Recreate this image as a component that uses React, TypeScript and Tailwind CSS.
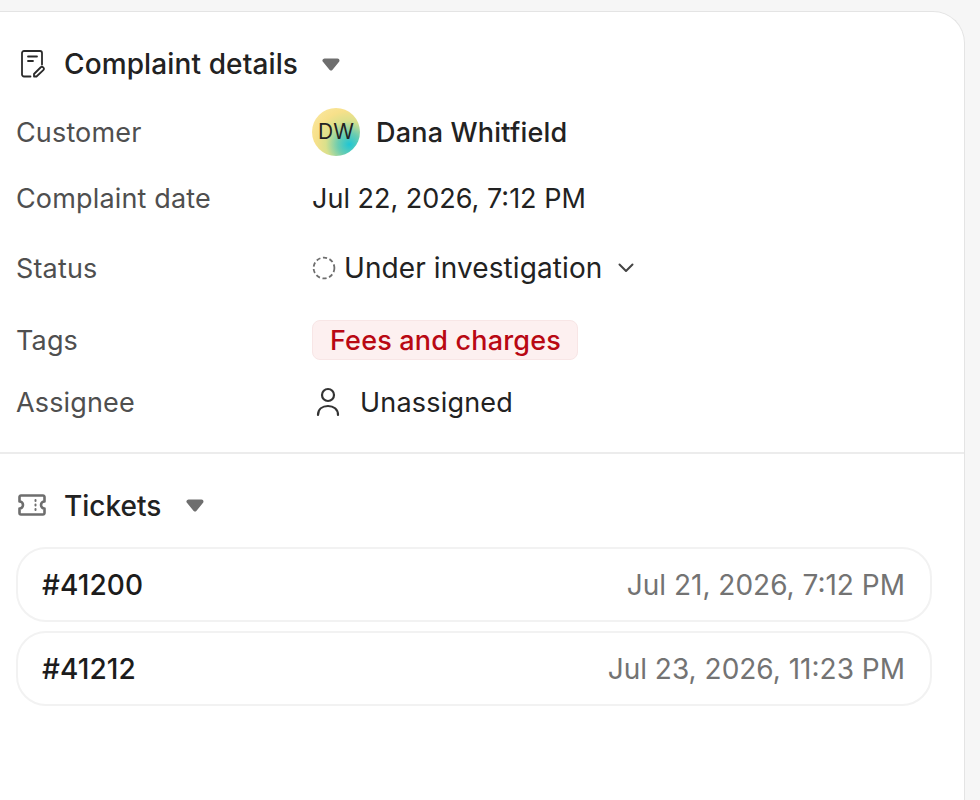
import React from 'react';

const tickets = [
  { id: '#41200', date: 'Jul 21, 2026, 7:12 PM' },
  { id: '#41212', date: 'Jul 23, 2026, 11:23 PM' },
];

function Caret() {
  return (
    <svg width="18" height="13" viewBox="0 0 18 13" fill="#6e6e6e" stroke="#6e6e6e" strokeWidth="4" strokeLinejoin="round" className="shrink-0">
      <path d="M2.5 2.5H15.5L9 10.5Z" />
    </svg>
  );
}

function NoteIcon() {
  return (
    <svg width="24" height="28" viewBox="0 0 24 28" fill="none" stroke="#2a2a2a" strokeWidth="1.8" strokeLinecap="round" strokeLinejoin="round" className="shrink-0">
      <path d="M9.500 26.500H3a2 2 0 0 1-2-2V3a2 2 0 0 1 2-2h16a2 2 0 0 1 2 2v11.500" />
      <path d="M7 6.500h9M7 11h5" />
      <path d="M13 26.500v-2.500l6.500-6.500a1.800 1.800 0 0 1 2.800 2.600l-6.800 6.400z" />
    </svg>
  );
}

function TicketIcon() {
  return (
    <svg width="28" height="22" viewBox="0 0 28 22" fill="none" stroke="#6e6e6e" strokeWidth="2.6" strokeLinejoin="round" className="shrink-0">
      <path d="M3 1.500h22a1.500 1.500 0 0 1 1.500 1.500v4.500a3.500 3.500 0 0 0 0 7V19a1.500 1.500 0 0 1-1.500 1.500H3A1.500 1.500 0 0 1 1.500 19v-4.500a3.500 3.500 0 0 0 0-7V3A1.500 1.500 0 0 1 3 1.500z" />
      <path d="M17.500 6v1M17.500 10.500v1M17.500 15v1" strokeWidth="2" strokeLinecap="round" />
    </svg>
  );
}

function Row({ label, mt, h, children }: { label: string; mt: string; h: string; children: React.ReactNode }) {
  return (
    <div className={`flex items-center ${mt} ${h}`}>
      <div className="w-[296px] shrink-0 pt-[2px] text-[#4f4f4f] tracking-[0.15px]">{label}</div>
      {children}
    </div>
  );
}

export default function App() {
  return (
    <div className="h-[800px] w-[980px] overflow-hidden bg-[#f6f6f6] pt-[11px] pr-[15px] text-[27px] leading-[40px] text-[#222222] font-['Inter',sans-serif]">
      <div className="h-full rounded-tr-[32px] border-t border-r border-[#e4e4e4] bg-white">
        <div className="px-4">
          <div className="mt-[32px] flex h-[40px] items-center">
            <div className="ml-[5px]"><NoteIcon /></div>
            <span className="ml-[19px] text-[28px] font-medium tracking-[0.12px]">Complaint details</span>
            <div className="ml-[24px]"><Caret /></div>
          </div>

          <Row label="Customer" mt="mt-[24px]" h="h-[48px]">
            <div className="flex h-[48px] w-[48px] items-center justify-center rounded-full bg-[radial-gradient(circle_at_78%_76%,#1fc6d4_0%,#6ccdb0_22%,#d9e08c_45%,#f7e08a_65%,#fbeaa8_100%)] text-[21px] text-[#222222]">DW</div>
            <span className="ml-4 pt-[2px] font-medium tracking-[0.2px]">Dana Whitfield</span>
          </Row>

          <Row label="Complaint date" mt="mt-[22px]" h="h-[40px]">
            <span className="pt-[2px]">Jul 22, 2026, 7:12 PM</span>
          </Row>

          <Row label="Status" mt="mt-[30px]" h="h-[40px]">
            <svg width="24" height="24" viewBox="0 0 24 24" fill="none" stroke="#6e6e6e" strokeWidth="1.8" strokeDasharray="4.200 2.600" className="shrink-0">
              <circle cx="12" cy="12" r="10.400" />
            </svg>
            <span className="ml-2 text-[28px] tracking-[0.1px]">Under investigation</span>
            <svg width="16" height="10" viewBox="0 0 16 10" fill="none" stroke="#444444" strokeWidth="2" strokeLinecap="round" strokeLinejoin="round" className="ml-4 shrink-0">
              <path d="M1.500 1.500L8 8l6.500-6.500" />
            </svg>
          </Row>

          <Row label="Tags" mt="mt-[32px]" h="h-[40px]">
            <span className="flex h-[40px] items-center rounded-lg border border-[#f8e6e6] bg-[#fdf0f0] pr-[16px] pl-[17px] pt-[2px] font-medium tracking-[0.18px] text-[#b90813]">Fees and charges</span>
          </Row>

          <Row label="Assignee" mt="mt-[22px]" h="h-[40px]">
            <svg width="24" height="30" viewBox="0 0 24 30" fill="none" stroke="#333333" strokeWidth="2.200" strokeLinecap="round" className="ml-[4px] shrink-0">
              <circle cx="12" cy="8" r="6" />
              <path d="M2 28c0-6 4.500-9 10-9s10 3 10 9" />
            </svg>
            <span className="ml-[20px] pt-[2px] tracking-[0.2px]">Unassigned</span>
          </Row>
        </div>

        <div className="mt-[30px] h-[2px] bg-[#ececec]" />

        <div className="px-4">
          <div className="mt-[31px] flex h-[40px] items-center">
            <div className="ml-[2px]"><TicketIcon /></div>
            <span className="ml-[18px] pt-[2px] text-[28px] font-medium">Tickets</span>
            <div className="ml-[25px]"><Caret /></div>
          </div>

          <div className="mt-[22px] flex w-[916px] flex-col gap-[9px]">
            {tickets.map((t) => (
              <div key={t.id} className="flex h-[75px] items-center justify-between rounded-[30px] border-2 border-[#f2f2f2] pr-[25px] pl-[24px] text-[28px]">
                <span className="font-medium tracking-[0.1px] text-[#1c1c1c]">{t.id}</span>
                <span className="text-[#737373]">{t.date}</span>
              </div>
            ))}
          </div>
        </div>
      </div>
    </div>
  );
}
